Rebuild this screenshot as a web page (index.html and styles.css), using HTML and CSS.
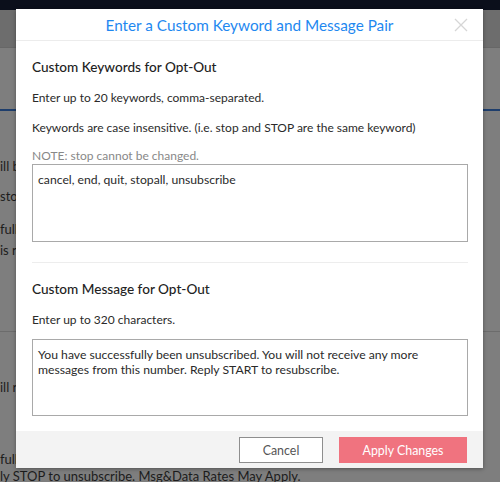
FILE: index.html
```html
<!DOCTYPE html>
<html>
<head>
<meta charset="utf-8">
<link rel="stylesheet" href="styles.css">
</head>
<body>
<div class="page">
  <div class="topbar"></div>
  <div class="band"></div>
  <div class="blue-line"></div>
  <div class="bg-text">
    <p class="l1">ill b</p>
    <p class="l2">sto</p>
    <p class="l3">fully</p>
    <p class="l4">is r</p>
  </div>
  <div class="gray-line"></div>
  <div class="bg-text">
    <p class="l5">ill r</p>
    <p class="l6">fully</p>
    <p class="l7">ly STOP to unsubscribe. Msg&amp;Data Rates May Apply.</p>
  </div>

  <div class="modal">
    <div class="modal-header">
      <h1 class="title">Enter a Custom Keyword and Message Pair</h1>
      <svg class="close" width="14" height="14" viewBox="0 0 14 14"><path d="M1 1L13 13M13 1L1 13" stroke="#d6d6d6" stroke-width="1.3" fill="none"/></svg>
    </div>
    <div class="modal-body">
      <section class="section">
        <h2 class="heading">Custom Keywords for Opt-Out</h2>
        <p class="text">Enter up to 20 keywords, comma-separated.</p>
        <p class="text">Keywords are case insensitive. (i.e. stop and STOP are the same keyword)</p>
        <p class="note">NOTE: stop cannot be changed.</p>
        <div class="textarea ta1">cancel, end, quit, stopall, unsubscribe</div>
      </section>
      <div class="divider"></div>
      <section class="section">
        <h2 class="heading">Custom Message for Opt-Out</h2>
        <p class="text">Enter up to 320 characters.</p>
        <div class="textarea ta2">You have successfully been unsubscribed. You will not receive any more messages from this number. Reply START to resubscribe.</div>
      </section>
    </div>
    <div class="modal-footer">
      <button class="btn btn-cancel">Cancel</button>
      <button class="btn btn-apply">Apply Changes</button>
    </div>
  </div>
</div>
</body>
</html>
```

FILE: styles.css
```css
* { box-sizing: border-box; }
html, body { margin: 0; padding: 0; }
body {
  width: 500px;
  height: 482px;
  overflow: hidden;
  background: #7e7e7e;
  font-family: Lato, "Open Sans", sans-serif;
}
.page {
  position: relative;
  width: 500px;
  height: 482px;
  overflow: hidden;
}
.topbar { height: 10px; background: #0b0f1b; }
.band { height: 38px; background: #6d6d6d; border-bottom: 1px solid #676767; }
.blue-line { margin-top: 61px; height: 2px; background: #1e3e6c; }
.bg-text { color: #1c1c1c; font-size: 13px; }
.bg-text p { margin: 0; white-space: nowrap; line-height: 16px; }
.bg-text .l1 { margin-top: 47px; }
.bg-text .l2 { margin-top: 14px; }
.bg-text .l3 { margin-top: 17px; }
.bg-text .l4 { margin-top: 5px; }
.gray-line { margin-top: 73px; height: 1px; background: #6c6c6c; }
.bg-text .l5 { margin-top: 47px; }
.bg-text .l6 { margin-top: 56px; }
.bg-text .l7 { margin-top: 1px; }

.modal {
  position: absolute;
  left: 16px;
  top: 9px;
  width: 467px;
  height: 459px;
  background: #fff;
  box-shadow: 0 1px 4px rgba(0,0,0,0.35);
  display: flex;
  flex-direction: column;
}
.modal-header {
  height: 32px;
  border-bottom: 1px solid #ececec;
  display: flex;
  align-items: center;
  justify-content: center;
  position: relative;
}
.title {
  margin: 0;
  font-size: 15.3px;
  font-weight: 400;
  color: #1e88f0;
}
.close {
  position: absolute;
  right: 15px;
  top: 9px;
}
.modal-body {
  flex: 1;
  padding: 0 15px 0 16px;
}
.section { padding-top: 17px; }
.heading {
  margin: 0;
  font-size: 13.6px;
  font-weight: 500;
  color: #222;
  line-height: 18px;
}
.text {
  margin: 14px 0 0;
  font-size: 12px;
  color: #2a2a2a;
  line-height: 16px;
}
.note {
  margin: 12px 0 0;
  font-size: 12px;
  color: #888;
  line-height: 16px;
}
.textarea {
  border: 1px solid #a9a9a9;
  font-size: 12.2px;
  color: #2a2a2a;
  line-height: 15px;
  padding: 7px 5px;
}
.ta1 { margin-top: 0; height: 78px; }
.ta2 { margin-top: 11px; height: 77px; }
.divider { margin-top: 20px; height: 1px; background: #ededed; }

.modal-footer {
  height: 37px;
  background: #f3f3f3;
  display: flex;
  justify-content: flex-end;
  align-items: center;
  gap: 16px;
  padding-right: 16px;
}
.btn {
  height: 26px;
  font-family: Lato, "Open Sans", sans-serif;
  font-size: 12.4px;
  border-radius: 0;
  margin-top: 1px;
}
.btn-cancel {
  width: 84px;
  background: #fff;
  border: 1px solid #8e8e8e;
  color: #555;
}
.btn-apply {
  width: 128px;
  background: #f0737f;
  border: 1px solid #f0737f;
  color: #fff;
}
```
